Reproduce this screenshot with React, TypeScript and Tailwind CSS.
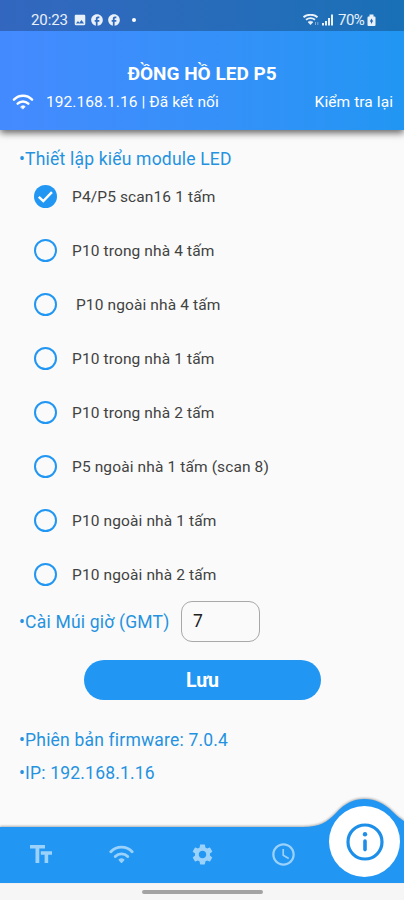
import React, { useState } from 'react'
import { MdAccessTime, MdFacebook, MdImage, MdSettings } from 'react-icons/md'

const modules = [
  'P4/P5 scan16 1 tấm',
  'P10 trong nhà 4 tấm',
  ' P10 ngoài nhà 4 tấm',
  'P10 trong nhà 1 tấm',
  'P10 trong nhà 2 tấm',
  'P5 ngoài nhà 1 tấm (scan 8)',
  'P10 ngoài nhà 1 tấm',
  'P10 ngoài nhà 2 tấm',
]

function WifiIcon({ className } : { className: string }) {
  return (
    <svg viewBox="0 0 24 18" className={className} fill="none" stroke="currentColor" strokeWidth="2.8" strokeLinecap="round">
      <path d="M1.8 6.3C7.4 .5 16.6 .5 22.2 6.3" />
      <path d="M6 10.9C9.3 7.6 14.7 7.6 18 10.9" />
      <path d="M9.6 14.2c1.4-1.2 3.4-1.2 4.8 0L12 16.7z" fill="currentColor" strokeWidth="1" strokeLinejoin="round" />
    </svg>
  )
}

function StatusBar() {
  return (
    <div className="h-[31px] bg-black/25 flex items-start justify-between pl-[31px] pr-[28px] pt-[11px] text-white/90">
      <div className="flex items-center h-[18px]">
        <span className="w-[37px] text-[15px] leading-[18px] tracking-[-0.1px] whitespace-nowrap">20:23</span>
        <MdImage className="ml-[5px] size-[14px]" />
        <MdFacebook className="ml-[3px] size-[14px]" />
        <MdFacebook className="ml-[3px] size-[14px]" />
        <span className="ml-[11px] size-[4px] rounded-full bg-white" />
      </div>
      <div className="flex items-center h-[18px]">
        <svg viewBox="0 0 16 12" className="w-[16px] h-[12px]" fill="none" stroke="currentColor">
          <path d="M.5 3.2C4.500 0 10.500 0 14.500 3.200" strokeWidth="2" />
          <path d="M3 5.800C6 3.600 9 3.600 12 5.800" strokeWidth="1.900" />
          <path d="M5 8c1.500-1.100 3.500-1.100 5 0L7.500 10.800z" fill="currentColor" strokeWidth=".5" />
          <path d="M12.500 8v3M14.800 8v3" strokeWidth=".8" opacity=".6" />
        </svg>
        <svg viewBox="0 0 12 12" className="ml-[3px] w-[12px] h-[12px]" fill="currentColor">
          <path d="M0 9h2v2.500H0zM3 7h2v4.500H3zM9 .5h2v11H9z" />
          <path d="M6 4h2v7.500H6z" />
        </svg>
        <span className="ml-[4px] w-[28px] text-[15px] leading-[18px] tracking-[-0.5px] whitespace-nowrap">70%</span>
        <svg viewBox="0 0 9 12" className="ml-[1px] w-[9px] h-[12px]">
          <path d="M2.500 .5h4V2.500h1a1 1 0 0 1 1 1V11a1 1 0 0 1-1 1h-6a1 1 0 0 1-1-1V3.500a1 1 0 0 1 1-1h1z" fill="currentColor" />
          <path d="M4.500 4.500L2.800 7.500h3.400zM4.500 10L3.500 7.500h2z" fill="#2766b5" />
        </svg>
      </div>
    </div>
  )
}

function Header() {
  return (
    <header className="relative h-[130px] flex-none bg-linear-to-r from-[#448aff] to-[#2196f3] text-white shadow-[0_3px_7px_rgba(0,0,0,0.6)]">
      <StatusBar />
      <h1 className="mt-[31px] h-[24px] text-center text-[19px] leading-[24px] font-bold">ĐỒNG HỒ LED P5</h1>
      <div className="mt-[5px] h-[22px] flex items-center pl-[12px] pr-[11px] text-[15.500px] leading-[22px]">
        <WifiIcon className="w-[22px] h-[16px]" />
        <span className="ml-[12px] whitespace-nowrap tracking-[0.080px]">192.168.1.16 | Đã kết nối</span>
        <button className="ml-auto whitespace-nowrap tracking-[0.080px]">Kiểm tra lại</button>
      </div>
    </header>
  )
}

function ModuleOption({ label, checked, onSelect } : { label: string, checked: boolean, onSelect: () => void }) {
  return (
    <button className="h-[54px] w-full flex items-center text-left pl-[34px]" onClick={onSelect}>
      {
        checked
          ? (
            <svg viewBox="0 0 24 24" className="size-[23px] flex-none">
              <circle cx="12" cy="12" r="12" fill="#2196f3" />
              <path d="M5 12.300l4.700 4.500 9-9.300" fill="none" stroke="white" strokeWidth="2.600" />
            </svg>
          )
          : <span className="size-[23px] flex-none rounded-full border-2 border-[#2196f3]" />
      }
      <span className="ml-[15px] pt-[3px] whitespace-pre text-[15.500px] tracking-[0.120px] text-[#424242]">{ label }</span>
    </button>
  )
}

function BottomNav() {
  return (
    <nav className="relative h-[84px] flex-none text-[#9bd2fb]">
      <svg viewBox="0 0 404 84" className="absolute inset-0 w-[404px] h-[84px] overflow-visible drop-shadow-[0_-1px_1px_rgba(0,0,0,0.3)]">
        <path d="M0 28H303C320 28 327 23 336 14C345 4 354 0 364.500 0C375 0 384 4 393 13C398 18 401 20 404 22V84H0z" fill="#2196f3" />
      </svg>
      <div className="relative h-full flex items-end">
        <button className="w-[81px] h-[58px] flex items-center justify-center">
          <svg viewBox="0 0 22 18" className="w-[22px] h-[18px]" fill="currentColor">
            <path d="M0 0h15v3.600H9.300V18H5.500V3.600H0z" />
            <path d="M10.800 6.300H22v3.400h-3.800V18h-3.600V9.700h-3.800z" />
          </svg>
        </button>
        <button className="w-[81px] h-[58px] flex items-center justify-center">
          <WifiIcon className="w-[25px] h-[19px]" />
        </button>
        <button className="w-[81px] h-[58px] flex items-center justify-center">
          <MdSettings className="size-[25px]" />
        </button>
        <button className="w-[81px] h-[58px] flex items-center justify-center">
          <MdAccessTime className="size-[27px]" />
        </button>
        <button className="ml-[5px] mb-[6px] size-[71px] rounded-full bg-white flex items-center justify-center">
          <svg viewBox="0 0 38 38" className="size-[38px] text-[#1e8fe8]" fill="none" stroke="currentColor">
            <circle cx="19" cy="19" r="17" strokeWidth="3.200" />
            <path d="M19 18v8.600" strokeWidth="3.600" strokeLinecap="round" />
            <circle cx="19" cy="11.300" r="2.200" fill="currentColor" stroke="none" />
          </svg>
        </button>
      </div>
    </nav>
  )
}

export default function App() {
  const [selected, setSelected] = useState(0)

  return (
    <div className="w-[404px] h-[900px] flex flex-col overflow-hidden bg-[#fafafa] font-[Roboto,sans-serif]">
      <Header />

      <main className="flex-1 text-[#2592e0] text-[17.500px]">
        <h2 className="mt-[17px] h-[22px] pl-[19px] leading-[24px] tracking-[0.2px]">•Thiết lập kiểu module LED</h2>

        <div>
          {
            modules.map((label, i) => (
              <ModuleOption key={label} label={label} checked={i === selected} onSelect={() => setSelected(i)} />
            ))
          }
        </div>

        <div className="flex items-center h-[41px]">
          <span className="w-[162px] pl-[19px] pt-[2px] whitespace-nowrap tracking-[0.2px]">•Cài Múi giờ (GMT)</span>
          <input
            className="ml-[19px] w-[79px] h-[41px] rounded-[11px] border border-[#a8a8a8] pl-[11px] pb-[2px] text-[17.500px] text-[#212121]"
            defaultValue="7"
          />
        </div>

        <button className="block ml-[84px] mt-[18px] w-[237px] h-[40px] rounded-full bg-[#2196f3] pt-[2px] text-white text-[19.500px] font-bold">Lưu</button>

        <p className="mt-[29px] h-[22px] pl-[19px] leading-[22px] tracking-[0.190px]">•Phiên bản firmware: 7.0.4</p>
        <p className="mt-[11px] h-[22px] pl-[19px] leading-[22px] tracking-[0.190px]">•IP: 192.168.1.16</p>
      </main>

      <BottomNav />
      <div className="h-[17px] flex-none bg-[#f6f6f6] flex justify-center pt-[7px]">
        <div className="w-[121px] h-[4px] rounded-full bg-[#a3a3a3]" />
      </div>
    </div>
  )
}
